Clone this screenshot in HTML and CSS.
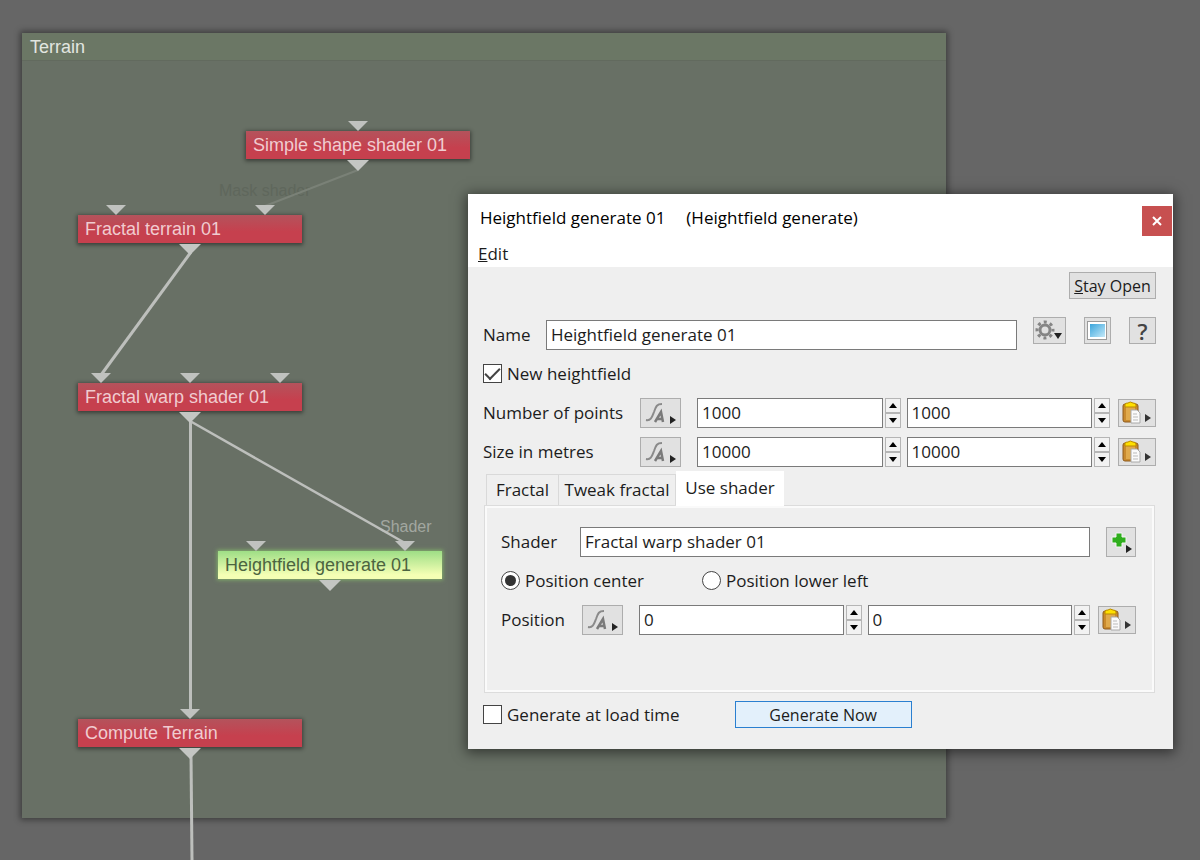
FILE: index.html
```html
<!DOCTYPE html>
<html lang="en">
<head>
    <meta charset="UTF-8">
    <meta name="viewport" content="width=device-width, initial-scale=1.0">
    <title>Heightfield generate 01</title>
    <link rel="stylesheet" href="styles.css">
</head>
<body>

    <!-- shared icons -->
    <svg class="icon-defs" width="0" height="0">
        <symbol id="icon-curve" viewBox="0 0 39 28">
            <path d="M5 21 C10 22 11 18 13 13 C15 7 16 5 21 5" fill="none" stroke="#8a8a8a" stroke-width="2"/>
            <path d="M14 23 L20 13 L22 23 M16 20 H22" fill="none" stroke="#7a7a7a" stroke-width="2.500"/>
            <path d="M29 17 L35 21 L29 25 Z" fill="#222"/>
        </symbol>
        <symbol id="icon-paste" viewBox="0 0 36 26">
            <rect x="4" y="4" width="15" height="18" rx="2" fill="#c98a2e" stroke="#8e5a1c"/>
            <rect x="7" y="6" width="9" height="14" fill="#e0aa4c"/>
            <path d="M6 7 V4 Q7 3 9 3 Q11 1 14 3 Q17 3 17 5 V7 Z" fill="#ffe000" stroke="#b98a00" stroke-width="1"/>
            <path d="M12 10 H18 L21 13 V23 H12 Z" fill="#fafafa" stroke="#aaa"/>
            <path d="M14 14 H18 M14 17 H19 M14 20 H19" stroke="#bbb"/>
            <path d="M26 14 L32 18 L26 22 Z" fill="#333"/>
        </symbol>
    </svg>

    <main class="network">
        <section class="group">
            <h2 class="group-title">Terrain</h2>
        </section>

        <div class="node simple-shape">Simple shape shader 01</div>
        <div class="node fractal-terrain">Fractal terrain 01</div>
        <div class="node fractal-warp">Fractal warp shader 01</div>
        <div class="node heightfield selected">Heightfield generate 01</div>
        <div class="node compute-terrain">Compute Terrain</div>
        <div class="port-label mask-label">Mask shader</div>
        <div class="port-label shader-label">Shader</div>

        <svg class="wires" width="1200" height="860">
            <g stroke="#bdbfbc" stroke-width="3">
                <path d="M191 252 L101 375"/>
                <path d="M190.500 420 V712"/>
                <path d="M190 421 L405 543" stroke-width="2.500"/>
                <path d="M191 755 L192 860"/>
            </g>
            <path d="M358 170 L265 206" stroke="#7a8177" stroke-width="2"/>
            <!-- inputs -->
            <g fill="#c0c2bf">
                <path d="M348 121 h20 l-10 10 z"/>
                <path d="M106 205 h20 l-10 10 z"/>
                <path d="M255 205 h20 l-10 10 z"/>
                <path d="M91 373 h20 l-10 10 z"/>
                <path d="M180 373 h20 l-10 10 z"/>
                <path d="M270 373 h20 l-10 10 z"/>
                <path d="M246 541 h20 l-10 10 z"/>
                <path d="M395 541 h20 l-10 10 z"/>
                <path d="M180 709 h20 l-10 10 z"/>
            </g>
            <!-- outputs -->
            <g fill="#c4c6c3">
                <path d="M347 160 h22 l-11 11 z"/>
                <path d="M179 244 h22 l-11 11 z"/>
                <path d="M179 412 h22 l-11 11 z"/>
                <path d="M319 580 h22 l-11 11 z"/>
                <path d="M179 748 h22 l-11 11 z"/>
            </g>
        </svg>

        <form class="dialog" onsubmit="return false">
            <header class="dialog-header">
                <div class="title-bar">
                    <h1 class="title"><span>Heightfield generate 01</span><span>(Heightfield generate)</span></h1>
                    <button type="button" class="close" aria-label="Close">
                        <svg width="10" height="10" viewBox="0 0 10 10"><path d="M1 1 L9 9 M9 1 L1 9" stroke="#fff" stroke-width="2"/></svg>
                    </button>
                </div>
                <button type="button" class="menu"><u>E</u>dit</button>
            </header>

            <div class="dialog-body">
                <div class="top-row">
                    <button type="button" class="btn stay-open"><u>S</u>tay Open</button>
                </div>

                <div class="row name-row">
                    <label for="name" class="name-text">Name</label>
                    <input type="text" id="name" value="Heightfield generate 01">
                    <div class="tools">
                        <button type="button" class="btn tool wide" aria-label="Settings">
                            <svg width="31" height="25" viewBox="0 0 31 25">
                                <circle cx="11" cy="12" r="5" fill="none" stroke="#858585" stroke-width="3"/>
                                <circle cx="11" cy="12" r="8" fill="none" stroke="#858585" stroke-width="3" stroke-dasharray="3 3.283" stroke-dashoffset="1.500"/>
                                <path d="M20 15 H28 L24 21 Z" fill="#222"/>
                            </svg>
                        </button>
                        <button type="button" class="btn tool" aria-label="Preview">
                            <svg width="25" height="25" viewBox="0 0 25 25">
                                <defs>
                                    <linearGradient id="sky" x1="0" y1="0" x2="1" y2="1">
                                        <stop offset="0" stop-color="#3aa5dc"/>
                                        <stop offset="1" stop-color="#c4e9f9"/>
                                    </linearGradient>
                                </defs>
                                <rect x="2.500" y="3.500" width="19" height="18" fill="#fff" stroke="#9a9a9a"/>
                                <rect x="5" y="6" width="15" height="13" fill="url(#sky)"/>
                            </svg>
                        </button>
                        <button type="button" class="btn tool help">?</button>
                    </div>
                </div>

                <div class="row">
                    <label class="choice"><input type="checkbox" checked>New heightfield</label>
                </div>

                <div class="row">
                    <label for="points-x" class="field-text">Number of points</label>
                    <button type="button" class="btn curve" aria-label="Animate number of points"><svg width="39" height="28"><use href="#icon-curve"/></svg></button>
                    <div class="spin">
                        <input type="text" id="points-x" value="1000">
                        <div class="steps"><button type="button" class="up" aria-label="Increase"></button><button type="button" class="down" aria-label="Decrease"></button></div>
                    </div>
                    <div class="spin">
                        <input type="text" aria-label="Number of points y" value="1000">
                        <div class="steps"><button type="button" class="up" aria-label="Increase"></button><button type="button" class="down" aria-label="Decrease"></button></div>
                    </div>
                    <button type="button" class="btn paste" aria-label="Copy or paste number of points"><svg width="36" height="26"><use href="#icon-paste"/></svg></button>
                </div>

                <div class="row">
                    <label for="size-x" class="field-text">Size in metres</label>
                    <button type="button" class="btn curve" aria-label="Animate size"><svg width="39" height="28"><use href="#icon-curve"/></svg></button>
                    <div class="spin">
                        <input type="text" id="size-x" value="10000">
                        <div class="steps"><button type="button" class="up" aria-label="Increase"></button><button type="button" class="down" aria-label="Decrease"></button></div>
                    </div>
                    <div class="spin">
                        <input type="text" aria-label="Size in metres y" value="10000">
                        <div class="steps"><button type="button" class="up" aria-label="Increase"></button><button type="button" class="down" aria-label="Decrease"></button></div>
                    </div>
                    <button type="button" class="btn paste" aria-label="Copy or paste size"><svg width="36" height="26"><use href="#icon-paste"/></svg></button>
                </div>

                <div class="tabs" role="tablist">
                    <button type="button" class="tab first" role="tab">Fractal</button>
                    <button type="button" class="tab second" role="tab">Tweak fractal</button>
                    <button type="button" class="tab active" role="tab" aria-selected="true">Use shader</button>
                </div>
                <div class="panel" role="tabpanel">
                    <div class="row">
                        <label for="shader" class="shader-text">Shader</label>
                        <input type="text" id="shader" value="Fractal warp shader 01">
                        <button type="button" class="btn add" aria-label="Add shader">
                            <svg width="28" height="28" viewBox="0 0 28 28">
                                <path d="M9 5 H15 V9 H19 V15 H15 V19 H9 V15 H5 V9 H9 Z" fill="#2fae1d" stroke="#f4f4f4"/>
                                <path d="M19 17 L25 21 L19 25 Z" fill="#222"/>
                            </svg>
                        </button>
                    </div>
                    <div class="row radios">
                        <label class="choice"><input type="radio" name="origin" checked>Position center</label>
                        <label class="choice"><input type="radio" name="origin">Position lower left</label>
                    </div>
                    <div class="row">
                        <label for="position-x" class="position-text">Position</label>
                        <button type="button" class="btn curve" aria-label="Animate position"><svg width="39" height="28"><use href="#icon-curve"/></svg></button>
                        <div class="spin">
                            <input type="text" id="position-x" value="0">
                            <div class="steps"><button type="button" class="up" aria-label="Increase"></button><button type="button" class="down" aria-label="Decrease"></button></div>
                        </div>
                        <div class="spin">
                            <input type="text" aria-label="Position y" value="0">
                            <div class="steps"><button type="button" class="up" aria-label="Increase"></button><button type="button" class="down" aria-label="Decrease"></button></div>
                        </div>
                        <button type="button" class="btn paste" aria-label="Copy or paste position"><svg width="36" height="26"><use href="#icon-paste"/></svg></button>
                    </div>
                </div>

                <div class="footer">
                    <label class="choice"><input type="checkbox">Generate at load time</label>
                    <button type="submit" class="btn generate">Generate Now</button>
                </div>
            </div>
        </form>
    </main>

</body>
</html>
```
FILE: styles.css
```css
* {
    box-sizing: border-box;
}
body {
    margin: 0;
    background: #666;
    color: #1c1c1c;
    font-family: "Open Sans", "Noto Sans", sans-serif;
    font-size: 17px;
    line-height: 24px;
}
button, input {
    font: inherit;
    color: inherit;
}
svg {
    display: block;
}
.icon-defs {
    position: absolute;
}
.network {
    position: relative;
    height: 100vh;
    overflow: hidden;
}

/* node graph */
.group {
    position: absolute;
    left: 22px;
    top: 33px;
    width: 924px;
    height: 785px;
    background: #687065;
    box-shadow: 0 0 6px 2px rgba(0, 0, 0, 0.4);
}
.group-title {
    margin: 0;
    padding: 1px 8px 0;
    background: #6b7765;
    border-bottom: 1px solid #626a5e;
    color: #e2e6e0;
    font-family: "Liberation Sans", Arial, sans-serif;
    font-size: 18px;
    font-weight: normal;
    line-height: 26px;
}
.node {
    position: absolute;
    width: 224px;
    padding-left: 7px;
    background: linear-gradient(#b4535c, #c6404e 60%);
    box-shadow: 0 1px 4px 1px rgba(0, 0, 0, 0.45);
    color: #f0ccd0;
    font-family: "Liberation Sans", Arial, sans-serif;
    font-size: 18px;
    line-height: 28px;
    white-space: nowrap;
}
.node.selected {
    background: linear-gradient(#9ede86, #f4ffb4 85%);
    box-shadow: 0 0 4px 1px rgba(150, 220, 110, 0.6);
    color: #4c6440;
}
.simple-shape {
    left: 246px;
    top: 131px;
}
.fractal-terrain {
    left: 78px;
    top: 215px;
}
.fractal-warp {
    left: 78px;
    top: 383px;
}
.heightfield {
    left: 218px;
    top: 551px;
}
.compute-terrain {
    left: 78px;
    top: 719px;
}
.port-label {
    position: absolute;
    font-family: "Liberation Sans", Arial, sans-serif;
    font-size: 16px;
    line-height: 20px;
}
.mask-label {
    left: 219px;
    top: 181px;
    color: #5f675c;
}
.shader-label {
    left: 380px;
    top: 517px;
    color: #a2a7a0;
}
.wires {
    position: absolute;
    left: 0;
    top: 0;
}

/* dialog */
.dialog {
    position: absolute;
    left: 468px;
    top: 194px;
    width: 705px;
    background: #efefef;
    box-shadow: 0 2px 12px 2px rgba(0, 0, 0, 0.5);
}
.dialog-header {
    height: 73px;
    padding: 12px 1px 0 10px;
    background: #fff;
}
.title-bar {
    display: flex;
    justify-content: space-between;
    height: 36px;
}
.title {
    display: flex;
    gap: 21px;
    margin: 0;
    padding-left: 2px;
    color: #000;
    font-size: 17px;
    font-weight: normal;
}
.close {
    display: flex;
    align-items: center;
    justify-content: center;
    width: 30px;
    height: 30px;
    padding: 0;
    border: 0;
    background: #c75050;
}
.menu {
    padding: 0;
    border: 0;
    background: none;
}
.dialog-body {
    padding: 5px 17px 21px 15px;
}
.top-row {
    display: flex;
    justify-content: flex-end;
    margin-bottom: 20px;
}
.row {
    display: flex;
    align-items: center;
    height: 31px;
    margin-bottom: 8px;
}
.row > label {
    flex: none;
}
.btn {
    flex: none;
    padding: 0;
    border: 1px solid #adadad;
    background: #e1e1e1;
}
.stay-open {
    width: 87px;
    height: 27px;
    font-size: 16px;
    line-height: 24px;
}
input[type="text"] {
    flex: 1;
    min-width: 0;
    height: 30px;
    padding: 0 4px 1px;
    border: 1px solid #7a7a7a;
    background: #fff;
}
.name-text {
    width: 63px;
}
.tools {
    display: flex;
    align-self: flex-start;
    gap: 18px;
    margin-left: 16px;
}
.tool {
    width: 27px;
    height: 27px;
    margin-top: -2px;
}
.wide {
    width: 33px;
}
.help {
    color: #444;
    font-size: 22px;
    font-weight: 600;
    line-height: 24px;
}
.choice {
    display: flex;
    align-items: center;
    gap: 5px;
}
input[type="checkbox"], input[type="radio"] {
    appearance: none;
    display: grid;
    place-items: center;
    width: 19px;
    height: 19px;
    margin: 0;
    border: 1px solid #444;
    background: #fff;
}
input[type="radio"] {
    border-radius: 50%;
}
input[type="checkbox"]:checked::before {
    content: "";
    width: 13px;
    height: 6px;
    margin-bottom: 4px;
    border: solid #444;
    border-width: 0 0 2px 2px;
    transform: rotate(-45deg);
}
input[type="radio"]:checked::before {
    content: "";
    width: 11px;
    height: 11px;
    border-radius: 50%;
    background: #333;
}
.field-text {
    width: 157px;
}
.curve {
    width: 41px;
    height: 30px;
    margin-right: 16px;
}
.spin {
    display: flex;
    flex: 1;
    gap: 2px;
    min-width: 0;
    margin-right: 6px;
}
.steps {
    display: flex;
    flex-direction: column;
    width: 16px;
}
.steps button {
    display: grid;
    flex: 1;
    place-items: center;
    padding: 0;
    border: 1px solid #b5b5b5;
    background: #f2f2f2;
}
.steps button::before {
    content: "";
    border: 4px solid transparent;
}
.steps .up::before {
    border-top-width: 0;
    border-bottom-width: 5px;
    border-bottom-color: #000;
}
.steps .down::before {
    border-bottom-width: 0;
    border-top-width: 5px;
    border-top-color: #000;
}
.paste {
    width: 38px;
    height: 28px;
    margin-left: 2px;
}

/* tabs */
.tabs {
    display: flex;
    align-items: flex-end;
    height: 34px;
    margin-top: -4px;
    padding-left: 3px;
}
.tab {
    height: 31px;
    padding: 0;
    border: 1px solid #d9d9d9;
    border-bottom: 0;
    background: #efefef;
}
.first {
    width: 72px;
    border-right: 0;
}
.second {
    width: 118px;
}
.active {
    position: relative;
    width: 108px;
    height: 35px;
    margin-bottom: -1px;
    padding-bottom: 2px;
    border-color: #fff;
    background: #fff;
}
.panel {
    height: 188px;
    margin: 0 1px;
    padding: 20px 18px 0 16px;
    border: 1px solid #dcdcdc;
    box-shadow: inset 0 0 0 2px #fafafa;
}
.shader-text {
    width: 79px;
}
.position-text {
    width: 81px;
}
.add {
    width: 30px;
    height: 30px;
    margin-left: 16px;
}
.radios {
    gap: 58px;
}
.footer {
    display: flex;
    align-items: center;
    gap: 55px;
    margin-top: 8px;
}
.generate {
    width: 177px;
    height: 27px;
    border-color: #2a7fd0;
    background: #e3f0fb;
    font-size: 16px;
    line-height: 24px;
}
```
